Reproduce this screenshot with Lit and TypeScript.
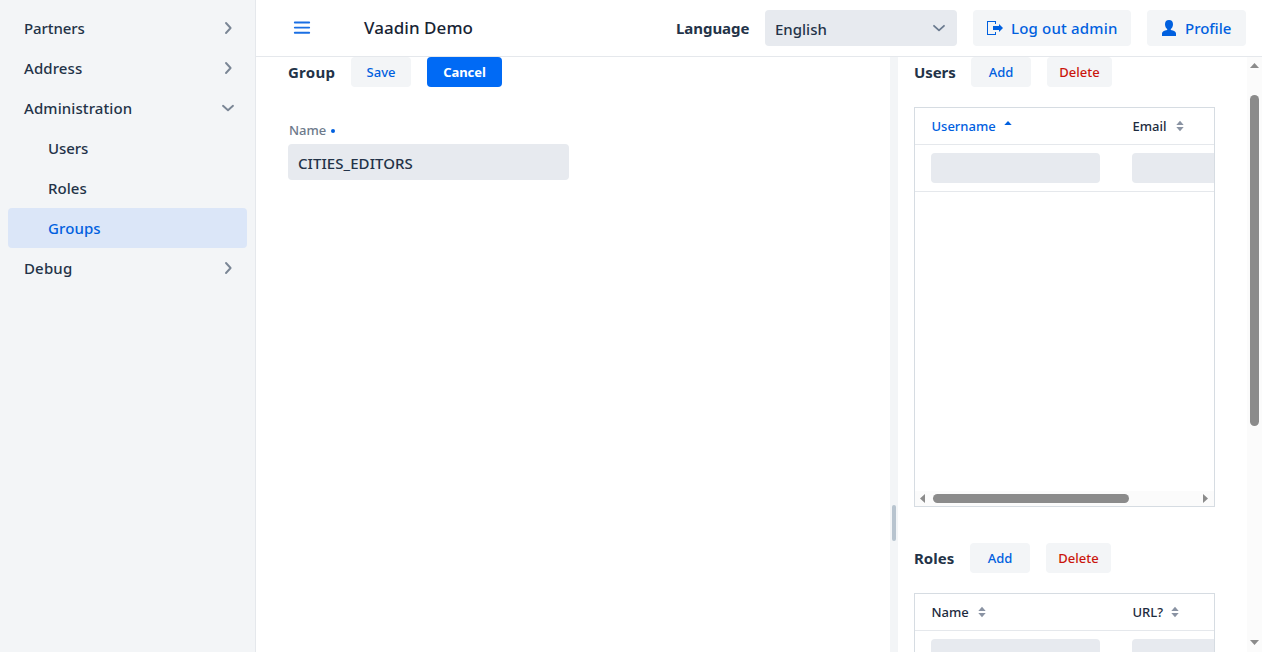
import { LitElement, html, css, svg, nothing } from "lit";
import { customElement, property } from "lit/decorators.js";
import { classMap } from "lit/directives/class-map.js";

interface NavItem {
  label: string;
  state?: "open" | "closed";
  track?: number;
  child?: boolean;
  current?: boolean;
}

const NAV: NavItem[] = [
  { label: "Partners", state: "closed", track: -0.1 },
  { label: "Address", state: "closed", track: 0.1 },
  { label: "Administration", state: "open", track: 0.1 },
  { label: "Users", child: true, track: -0.1 },
  { label: "Roles", child: true, track: 0.05 },
  { label: "Groups", child: true, track: 0.1, current: true },
  { label: "Debug", state: "closed", track: 0.15 },
];

const down = svg`<path d="M-5 -2.2 L0 2.3 L5 -2.2" />`;
const right = svg`<path d="M-2 -5 L2.6 0 L-2 5" />`;

@customElement("nav-item")
class NavItemElement extends LitElement {
  @property({ attribute: false }) item!: NavItem;

  static styles = css`
    :host { display: block; }
    .item { display: flex; align-items: center; height: 40px; padding: 0 10px 0 16px; border-radius: 4px; color: #233348; }
    .child { padding-left: 40px; }
    .current { background: #dbe6f8; color: #0060df; }
    .label { flex: 1; }
    svg { width: 18px; height: 18px; fill: none; stroke: #7a8695; stroke-width: 1.9; stroke-linecap: round; stroke-linejoin: round; }
  `;

  render() {
    const { label, state, track, child, current } = this.item;
    return html`
      <div class=${classMap({ item: true, child: !!child, current: !!current })}>
        <span class="label" style="letter-spacing:${track ?? 0}px">${label}</span>
        ${state ? html`<svg viewBox="-9 -9 18 18">${state === "open" ? down : right}</svg>` : nothing}
      </div>
    `;
  }
}

@customElement("ui-button")
class UiButton extends LitElement {
  @property() variant = "";

  static styles = css`
    :host { display: block; flex: none; }
    .button {
      display: flex; align-items: center; justify-content: center; box-sizing: border-box;
      height: 30px; min-width: 60px; padding: 0 12px; border-radius: 4px;
      background: #f3f5f7; color: #0060df; font-size: 13px; white-space: nowrap;
    }
    .primary { background: #006af5; color: #fff; font-weight: 700; width: 75px; letter-spacing: -0.1px; }
    .error { color: #ca150c; width: 65px; }
    .large { justify-content: flex-start; height: 36px; font-size: 15px; gap: 8px; padding: 0 0 0 14px; }
    .logout { width: 158px; }
    .profile { width: 99px; }
  `;

  render() {
    return html`<div class="button ${this.variant}"><slot></slot></div>`;
  }
}

interface Column { label: string; sort?: "asc"; gap: number }

@customElement("data-grid")
class DataGrid extends LitElement {
  @property({ attribute: false }) columns: Column[] = [];

  static styles = css`
    :host { display: block; }
    .grid {
      display: flex; flex-direction: column; box-sizing: border-box; width: 301px; height: 400px;
      border: 1px solid #d6dce2; background: #fff; overflow: hidden;
    }
    .row { display: grid; grid-template-columns: 201px 201px; border-bottom: 1px solid #e5e8ec; }
    .head { height: 36px; align-items: center; font-size: 13px; color: #1d2b3e; }
    .filters { height: 46px; align-items: center; }
    .cell { display: flex; align-items: center; padding: 0 16px; }
    .head .cell { padding-left: 16.5px; }
    .asc { color: #0060df; }
    .field { flex: 1; height: 30px; border-radius: 4px; background: #e7eaef; }
    .body { flex: 1; }
    .sorter { width: 8px; height: 12px; fill: #8a93a3; }
    .asc .sorter { fill: #0060df; }
    .scroll { display: flex; align-items: center; height: 15px; background: #fbfbfb; }
    .scroll svg { width: 18px; height: 15px; fill: #8b8b8b; }
    .track { flex: 1; }
    .thumb { width: 196px; height: 9px; border-radius: 5px; background: #8b8b8b; }
  `;

  render() {
    return html`
      <div class="grid">
        <div class="row head">
          ${this.columns.map((c) => html`
            <div class="cell ${c.sort ?? ""}" style="gap:${c.gap}px">
              <span>${c.label}</span>
              <svg class="sorter" viewBox="0 0 8 12">
                ${c.sort === "asc"
                  ? svg`<path d="M4 1 L7.7 5 H0.3 Z" />`
                  : svg`<path d="M4 0.8 L7.7 5 H0.3 Z M4 11.2 L7.7 7 H0.3 Z" />`}
              </svg>
            </div>
          `)}
        </div>
        <div class="row filters">
          ${this.columns.map(() => html`<div class="cell"><div class="field"></div></div>`)}
        </div>
        <div class="body"></div>
        <div class="scroll">
          <svg viewBox="0 0 18 15"><path d="M5 7.5 L10 3 V12 Z" /></svg>
          <div class="track"><div class="thumb"></div></div>
          <svg viewBox="0 0 18 15"><path d="M12 7.5 L7 3 V12 Z" /></svg>
        </div>
      </div>
    `;
  }
}

@customElement("app-root")
export class AppRoot extends LitElement {
  static styles = css`
    :host {
      display: flex; height: 652px; overflow: hidden; background: #fff;
      font: 500 15px/20px "Noto Sans", "Open Sans", sans-serif; color: #1f2d40;
    }
    nav { flex: none; box-sizing: border-box; width: 256px; padding: 8px; background: #f3f5f7; border-right: 1px solid #e5e8ec; }
    .main { flex: 1; min-width: 0; display: flex; flex-direction: column; }
    header { display: flex; align-items: center; flex: none; height: 56px; padding: 0 16px 0 37px; border-bottom: 1px solid #e5e8ec; }
    .menu { width: 18px; height: 18px; margin-right: 53px; fill: none; stroke: #1a6fe3; stroke-width: 1.9; stroke-linecap: round; }
    .title { font-size: 17px; letter-spacing: 0.05px; color: #182434; }
    .language { margin-left: auto; font-weight: 700; width: 73px; white-space: nowrap; letter-spacing: -0.05px; color: #233348; }
    .select {
      display: flex; align-items: center; justify-content: space-between; box-sizing: border-box;
      width: 192px; height: 36px; margin: 0 16px; padding: 2px 9px 0 10px; border-radius: 4px;
      background: #e7eaef; color: #233348;
    }
    .select svg { width: 18px; height: 18px; margin-top: -2px; fill: none; stroke: #6a7a8f; stroke-width: 1.8; stroke-linecap: round; stroke-linejoin: round; }
    .profile { margin-left: 16px; }
    .icon { width: 16px; height: 16px; fill: #0060df; flex: none; }
    .logout { letter-spacing: 0.18px; }
    .split { flex: 1; min-height: 0; display: flex; }
    .left { width: 634px; box-sizing: border-box; padding-left: 32px; flex: none; }
    .splitter { width: 8px; flex: none; box-sizing: border-box; background: #f3f5f7; display: flex; flex-direction: column; padding: 448px 2px 0; }
    .handle { width: 4px; height: 36px; border-radius: 2px; background: #b8c4cf; }
    .right { flex: 1; min-width: 0; padding-left: 16px; overflow: hidden; }
    .toolbar { display: flex; align-items: center; gap: 16px; height: 30px; }
    h4 { margin: 0; font-size: 15px; font-weight: 700; white-space: nowrap; color: #233348; }
    .w47 { width: 47px; letter-spacing: 0.25px; }
    .w41 { width: 41px; letter-spacing: -0.1px; }
    .w40 { width: 40px; }
    .label { display: flex; align-items: center; gap: 5px; margin-top: 33px; padding-left: 1px; font-size: 13px; color: #6d7a8b; }
    .dot { width: 4px; height: 4px; border-radius: 2px; background: #0060df; margin-top: 1px; }
    .input {
      display: flex; align-items: center; box-sizing: border-box; width: 281px; height: 36px; margin-top: 4px;
      padding: 2px 10px 0; border-radius: 4px; background: #e7eaef; color: #233348; letter-spacing: 0.07px;
    }
    data-grid { margin-top: 20px; }
    .second { margin-top: 36px; }
    .vscroll { width: 15px; flex: none; background: #fbfbfb; display: flex; flex-direction: column; align-items: center; }
    .vscroll svg { width: 15px; height: 18px; fill: #8b8b8b; }
    .vthumb { width: 9px; height: 331px; border-radius: 5px; background: #8b8b8b; margin-top: 20px; }
    .vfill { flex: 1; }
  `;

  render() {
    return html`
      <nav>${NAV.map((n) => html`<nav-item .item=${n}></nav-item>`)}</nav>
      <div class="main">
        <header>
          <svg class="menu" viewBox="0 0 18 18"><path d="M1.8 3.5 H16.2 M1.8 8.6 H16.2 M1.8 13.7 H16.2" /></svg>
          <span class="title">Vaadin Demo</span>
          <span class="language">Language</span>
          <div class="select"><span>English</span><svg viewBox="-9 -9 18 18">${down}</svg></div>
          <ui-button variant="large logout">
            <svg class="icon" viewBox="0 0 16 16"><path d="M9 4 V1 H0 V15 H9 V12 H8 V14 H1 V2 H8 V4 Z M16 8 L12 4 V6 H6 V10 H12 V12 Z" /></svg>
            <span class="logout">Log out admin</span>
          </ui-button>
          <ui-button class="profile" variant="large profile">
            <svg class="icon" viewBox="0 0 16 16"><path d="M8 0 C5.4 0 4 1.6 4 4.2 C4 6.4 5 8.2 6.2 9 V10 C3 10.5 1 11.6 1 13.6 V16 H15 V13.6 C15 11.6 13 10.5 9.8 10 V9 C11 8.2 12 6.4 12 4.2 C12 1.6 10.6 0 8 0 Z" /></svg>
            <span>Profile</span>
          </ui-button>
        </header>
        <div class="split">
          <section class="left">
            <div class="toolbar"><h4 class="w47">Group</h4><ui-button>Save</ui-button><ui-button variant="primary">Cancel</ui-button></div>
            <div class="label"><span>Name</span><span class="dot"></span></div>
            <div class="input">CITIES_EDITORS</div>
          </section>
          <div class="splitter"><div class="handle"></div></div>
          <section class="right">
            <div class="toolbar"><h4 class="w41">Users</h4><ui-button>Add</ui-button><ui-button variant="error">Delete</ui-button></div>
            <data-grid .columns=${[{ label: "Username", sort: "asc", gap: 8 }, { label: "Email", gap: 9 }]}></data-grid>
            <div class="toolbar second"><h4 class="w40">Roles</h4><ui-button>Add</ui-button><ui-button variant="error">Delete</ui-button></div>
            <data-grid .columns=${[{ label: "Name", gap: 9 }, { label: "URL?", gap: 8 }]}></data-grid>
          </section>
          <div class="vscroll">
            <svg viewBox="0 0 15 18"><path d="M7.5 6 L12 11 H3 Z" /></svg>
            <div class="vthumb"></div>
            <div class="vfill"></div>
            <svg viewBox="0 0 15 18"><path d="M7.5 11 L12 6 H3 Z" /></svg>
          </div>
        </div>
      </div>
    `;
  }
}
